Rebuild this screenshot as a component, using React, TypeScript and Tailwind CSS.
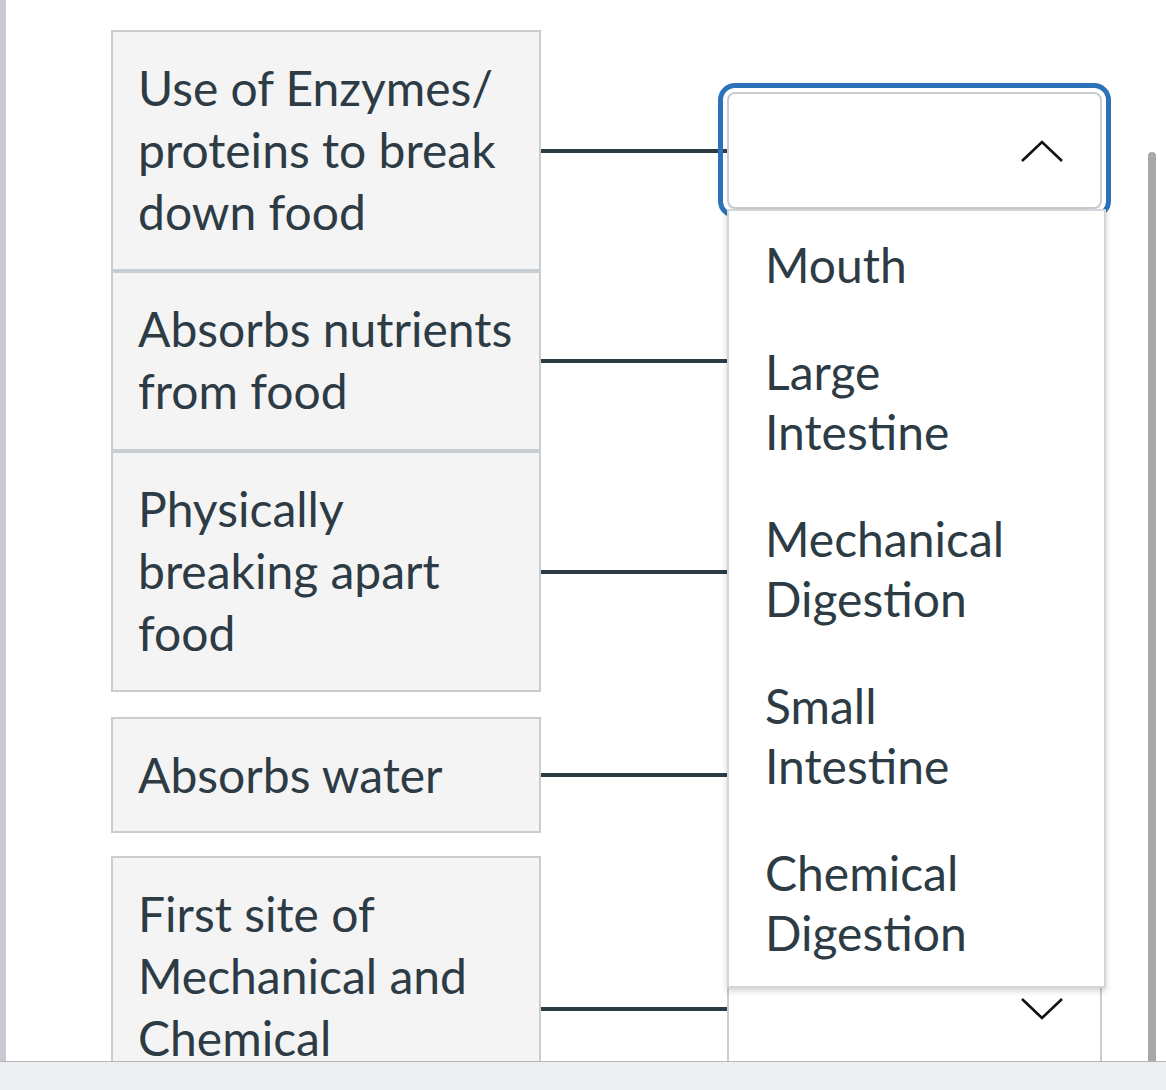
import React from "react"

const rows = [
  { text: "Use of Enzymes/ proteins to break down food", h: "h-[241px]", mt: "mt-0", open: true },
  { text: "Absorbs nutrients from food", h: "h-[180px]", mt: "mt-0" },
  { text: "Physically breaking apart food", h: "h-[241px]", mt: "mt-0" },
  { text: "Absorbs water", h: "h-[116px]", mt: "mt-[24px]" },
  { text: "First site of Mechanical and Chemical Digestion", h: "h-[306px]", mt: "mt-[23px]" },
]

const options = ["Mouth", "Large Intestine", "Mechanical Digestion", "Small Intestine", "Chemical Digestion"]

const Chevron = ({ up }: { up?: boolean }) => (
  <svg width="42" height="24" viewBox="0 0 42 24" fill="none" stroke="#111" strokeWidth="2.6">
    {up ? <path d="M1 22 L21 3 L41 22" /> : <path d="M1 2 L21 21 L41 2" />}
  </svg>
)

const Select = ({ open }: { open?: boolean }) => (
  <div className="relative">
    <div
      className={`flex h-[117px] w-[375px] items-center justify-end rounded-lg border-2 border-[#c7cdd1] bg-white pr-[37px] ${
        open ? "outline-[5px] outline-offset-[4px] outline-solid outline-[#2b72b8]" : ""
      }`}
    >
      <Chevron up={open} />
    </div>
    {open && (
      <ul className="absolute left-0 top-[117px] z-10 w-[379px] border-2 border-[#d3d6d9] bg-white shadow-[0_3px_6px_rgba(0,0,0,0.18)]">
        {options.map((o) => (
          <li key={o} className="w-[275px] py-[23.5px] pl-[36px] text-[48px] leading-[60px]">
            {o}
          </li>
        ))}
      </ul>
    )}
  </div>
)

export default function App() {
  return (
    <div
      className="relative h-[1090px] w-[1166px] overflow-hidden bg-white text-[#2d3b45]"
      style={{ fontFamily: "Lato, 'Open Sans', sans-serif" }}
    >
      <div className="h-[1061px] overflow-hidden border-l-[6px] border-[#c7cbd0] pl-[105px] pt-[30px]">
        {rows.map((r, i) => (
          <div key={i} className={`flex items-center ${r.mt}`}>
            <div className={`${r.h} w-[430px] shrink-0 border-2 border-[#c7cdd1] bg-[#f4f4f5] px-[25px] py-[25px]`}>
              <p className="text-[48px] leading-[62px]">{r.text}</p>
            </div>
            <div className="h-[4px] w-[186px] bg-[#2d3b45]" />
            <Select open={r.open} />
          </div>
        ))}
      </div>
      <div className="h-[29px] border-t border-[#b4b6b9] bg-[#eeeff1]" />
      <div className="absolute left-[1148px] top-[152px] h-[909px] w-[8px] rounded-t-full bg-[#a8a8a8]" />
    </div>
  )
}
